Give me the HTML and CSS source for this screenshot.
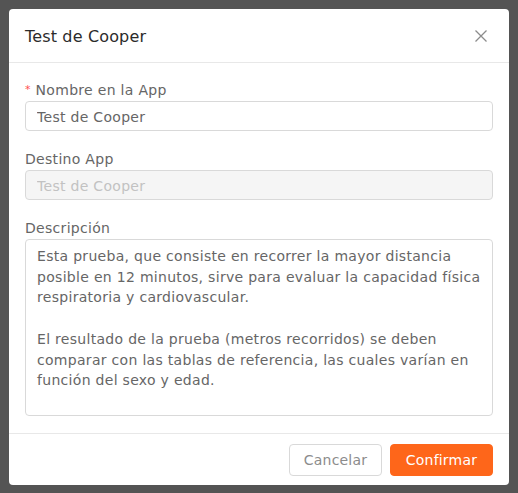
FILE: index.html
```html
<!DOCTYPE html>
<html lang="es">
<head>
<meta charset="utf-8">
<title>Test de Cooper</title>
<link rel="stylesheet" href="styles.css">
</head>
<body>
<div class="modal">
  <div class="modal-header">
    <span class="modal-title">Test de Cooper</span>
    <button class="close" aria-label="Cerrar">
      <svg width="14" height="14" viewBox="0 0 14 14"><path d="M1.5 1.5 L12.5 12.5 M12.5 1.5 L1.5 12.5" stroke="#8c8c8c" stroke-width="1.3" fill="none"/></svg>
    </button>
  </div>
  <div class="modal-body">
    <div class="field">
      <label class="label"><span class="req">*</span> Nombre en la App</label>
      <input class="input" type="text" value="Test de Cooper">
    </div>
    <div class="field">
      <label class="label">Destino App</label>
      <input class="input" type="text" value="Test de Cooper" disabled>
    </div>
    <div class="field">
      <label class="label">Descripción</label>
      <textarea class="textarea" wrap="off">Esta prueba, que consiste en recorrer la mayor distancia
posible en 12 minutos, sirve para evaluar la capacidad física
respiratoria y cardiovascular.

El resultado de la prueba (metros recorridos) se deben
comparar con las tablas de referencia, las cuales varían en
función del sexo y edad.</textarea>
    </div>
  </div>
  <div class="modal-footer">
    <button class="btn btn-default">Cancelar</button>
    <button class="btn btn-primary">Confirmar</button>
  </div>
</div>
</body>
</html>
```
FILE: styles.css
```css
html, body {
  margin: 0;
  padding: 0;
  background: #545454;
  font-family: "DejaVu Sans", "Open Sans", sans-serif;
}
.modal {
  margin: 9px;
  width: 500px;
  height: 476px;
  background: #fff;
  border-radius: 4px;
  display: flex;
  flex-direction: column;
  overflow: hidden;
}
.modal-header {
  height: 54px;
  box-sizing: border-box;
  padding: 0 16px;
  display: flex;
  align-items: center;
  justify-content: space-between;
  border-bottom: 1px solid #e8e8e8;
}
.modal-title {
  font-size: 16px;
  color: #2b2b2b;
  letter-spacing: 0.15px;
  padding-top: 1px;
}
.close {
  border: 0;
  background: none;
  padding: 0;
  width: 14px;
  height: 14px;
  margin-right: 5px;
  display: flex;
  cursor: pointer;
}
.modal-body {
  padding: 14px 16px 17px;
  display: flex;
  flex-direction: column;
  gap: 15px;
  letter-spacing: 0.3px;
}
.field {
  display: flex;
  flex-direction: column;
}
.label {
  font-size: 14px;
  line-height: 24px;
  height: 23px;
  padding-top: 1px;
  color: #666;
}
.req {
  color: #ff4d4f;
  font-size: 11px;
  vertical-align: 2px;
}
.input {
  box-sizing: border-box;
  height: 30px;
  width: 100%;
  border: 1px solid #d9d9d9;
  border-radius: 4px;
  padding: 1px 11px 0;
  font: inherit;
  font-size: 14px;
  letter-spacing: 0.3px;
  color: #666;
  background: #fff;
  outline: none;
}
.input:disabled {
  background: #f5f5f5;
  color: #c2c2c2;
}
.textarea {
  box-sizing: border-box;
  height: 177px;
  width: 100%;
  border: 1px solid #d9d9d9;
  border-radius: 4px;
  padding: 6px 11px 5px;
  font: inherit;
  font-size: 14px;
  letter-spacing: 0.3px;
  line-height: 20.7px;
  color: #666;
  resize: none;
  overflow: hidden;
  outline: none;
  white-space: pre;
}
.modal-footer {
  flex: 1;
  border-top: 1px solid #e8e8e8;
  padding: 10px 16px 0;
  display: flex;
  justify-content: flex-end;
  align-items: flex-start;
  gap: 8px;
}
.btn {
  height: 32px;
  border-radius: 4px;
  font: inherit;
  font-size: 14px;
  letter-spacing: 0.2px;
  cursor: pointer;
  box-sizing: border-box;
}
.btn-default {
  width: 93px;
  background: #fff;
  border: 1px solid #d9d9d9;
  color: #8c8c8c;
}
.btn-primary {
  width: 103px;
  background: #fe661a;
  border: 1px solid #fe661a;
  color: #fff;
}
```
